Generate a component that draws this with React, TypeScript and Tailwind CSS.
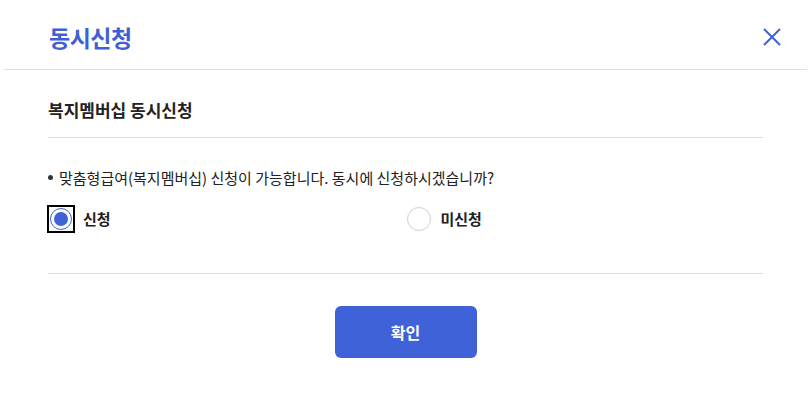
import { useState } from 'react'

function Radio({ checked, focused, label, onClick }: { checked: boolean; focused?: boolean; label: string; onClick: () => void }) {
  return (
    <button type="button" onClick={onClick} className="flex items-center gap-[9px]">
      <span className={`flex items-center justify-center w-[26px] h-[26px] ${focused ? 'outline outline-2 outline-black -outline-offset-1' : ''}`}>
        {checked ? (
          <span className="w-[22px] h-[22px] rounded-full border border-[#4062d8] flex items-center justify-center">
            <span className="w-[14px] h-[14px] rounded-full bg-[#4062d8]" />
          </span>
        ) : (
          <span className="w-[24px] h-[24px] rounded-full border border-[#cfcfcf] bg-white" />
        )}
      </span>
      <span className="text-[15px] font-bold text-[#222]">{label}</span>
    </button>
  )
}

export default function App() {
  const [value, setValue] = useState<'yes' | 'no'>('yes')

  return (
    <div className="w-[811px] h-[403px] bg-white px-[4px] pt-[5px] pb-[6px] font-['Noto_Sans_CJK_KR','Noto_Sans',sans-serif]">
      <div className="h-full rounded-[8px] bg-white shadow-[0_0_2px_rgba(0,0,0,0.04)] flex flex-col">
        {/* Header */}
        <div className="h-[65px] flex items-center justify-between pl-[45px] pr-[24px] border-b border-[#dedede]">
          <h1 className="text-[23px] font-bold text-[#3f5fd6] tracking-[-0.5px]">동시신청</h1>
          <button type="button" className="text-[#4062d8]" aria-label="닫기">
            <svg width="22" height="22" viewBox="0 0 22 22" fill="none" stroke="currentColor" strokeWidth="2">
              <path d="M3 3L19 19M19 3L3 19" />
            </svg>
          </button>
        </div>

        {/* Body */}
        <div className="px-[44px] pt-[27px]">
          <h2 className="text-[17px] font-bold text-[#222] pb-[14px] border-b border-[#dedede]">복지멤버십 동시신청</h2>

          <p className="mt-[29px] text-[15px] text-[#222] flex items-center gap-[6px]">
            <span className="w-[5px] h-[5px] rounded-full bg-[#333]" />
            맞춤형급여(복지멤버십) 신청이 가능합니다. 동시에 신청하시겠습니까?
          </p>

          <div className="mt-[17px] grid grid-cols-2 pb-[41px] border-b border-[#dedede]">
            <Radio checked={value === 'yes'} focused label="신청" onClick={() => setValue('yes')} />
            <Radio checked={value === 'no'} label="미신청" onClick={() => setValue('no')} />
          </div>

          <div className="flex justify-center pt-[32px]">
            <button type="button" className="w-[142px] h-[52px] rounded-[6px] bg-[#4062d8] text-white text-[16px] font-bold">
              확인
            </button>
          </div>
        </div>
      </div>
    </div>
  )
}
